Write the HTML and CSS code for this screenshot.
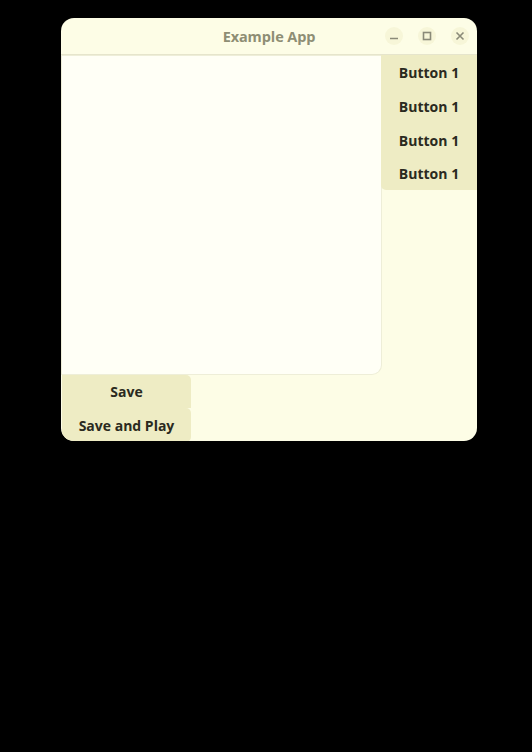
FILE: index.html
```html
<!DOCTYPE html>
<html>
<head>
<meta charset="utf-8">
<link rel="stylesheet" href="styles.css">
</head>
<body>
<div class="window">
  <div class="titlebar">
    <div class="title">Example App</div>
    <div class="controls">
      <div class="ctl"><svg width="10" height="10" viewBox="0 0 10 10"><path d="M1 7.5h8" stroke="#8a8a78" stroke-width="1.6"/></svg></div>
      <div class="ctl"><svg width="10" height="10" viewBox="0 0 10 10"><rect x="1.5" y="1.5" width="7" height="7" fill="none" stroke="#8a8a78" stroke-width="1.6"/></svg></div>
      <div class="ctl"><svg width="10" height="10" viewBox="0 0 10 10"><path d="M1.5 1.5l7 7M8.5 1.5l-7 7" stroke="#8a8a78" stroke-width="1.6"/></svg></div>
    </div>
  </div>
  <div class="main">
    <div class="editor"></div>
    <div class="side">
      <div class="btn side-btn">Button 1</div>
      <div class="btn side-btn">Button 1</div>
      <div class="btn side-btn">Button 1</div>
      <div class="btn side-btn last">Button 1</div>
    </div>
  </div>
  <div class="bottom">
    <div class="btn bot-btn">Save</div>
    <div class="btn bot-btn last">Save and Play</div>
  </div>
</div>
</body>
</html>
```
FILE: styles.css
```css
html, body {
  margin: 0;
  padding: 0;
  background: #000;
}
body {
  padding: 18px 0 0 61px;
  font-family: "Open Sans", "Noto Sans", sans-serif;
}
.window {
  width: 416px;
  height: 423px;
  background: #fdfde6;
  border-radius: 13px;
  overflow: hidden;
  display: flex;
  flex-direction: column;
}
.titlebar {
  height: 36px;
  flex: none;
  display: flex;
  align-items: center;
  justify-content: center;
  position: relative;
  border-bottom: 1px solid #e6e5cc;
}
.title {
  font-weight: 700;
  font-size: 14.5px;
  color: #8e8e74;
  padding-top: 1px;
  letter-spacing: -0.1px;
}
.controls {
  position: absolute;
  right: 8px;
  top: 9px;
  display: flex;
  gap: 15px;
}
.ctl {
  width: 18px;
  height: 18px;
  border-radius: 50%;
  background: #f7f6d8;
  display: flex;
  align-items: center;
  justify-content: center;
}
.main {
  display: flex;
  height: 319px;
  flex: none;
}
.editor {
  width: 319px;
  margin: 1px 0 0 1px;
  background: #fffff6;
  border-bottom-right-radius: 9px;
  box-shadow: 0 0 0 1px #eeeed8;
}
.side {
  width: 96px;
  display: flex;
  flex-direction: column;
}
.btn {
  background: #eeecc4;
  color: #2a2a20;
  font-weight: 700;
  font-size: 14px;
  display: flex;
  align-items: center;
  justify-content: center;
}
.side-btn {
  height: 34px;
}
.side-btn.last {
  height: 33px;
  border-bottom-left-radius: 5px;
}
.bottom {
  display: flex;
  flex-direction: column;
  margin: 1px 0 0 1px;
  width: 129px;
}
.bot-btn {
  height: 33px;
  border-top-right-radius: 5px;
}
.bot-btn.last {
  height: 34px;
  border-top-right-radius: 5px;
  border-bottom-right-radius: 5px;
}
```
